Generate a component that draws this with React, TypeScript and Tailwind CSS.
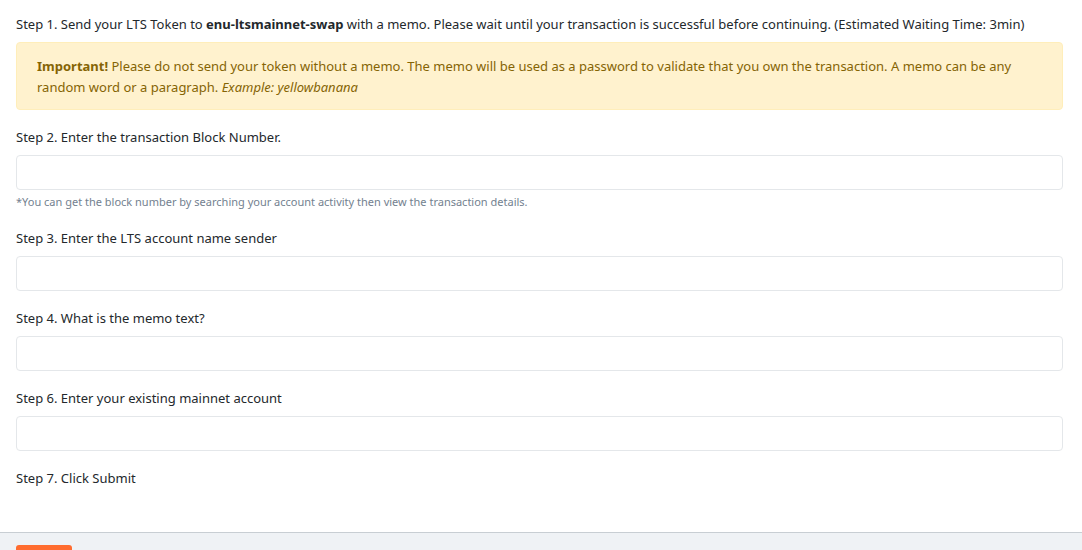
import { useId } from "react";

function Field({ label, hint }: { label: string; hint?: string }) {
  const id = useId();
  const hintId = `${id}-hint`;
  return (
    <div className="mb-[17px] flex flex-col">
      <label htmlFor={id} className="mb-[7px]">{label}</label>
      <input
        id={id}
        type="text"
        aria-describedby={hint ? hintId : undefined}
        className="h-[35px] w-full rounded-[4px] border border-[#e4e7ea] bg-white px-3 text-[#5c6873] outline-none focus:border-[#8ad4ee]"
      />
      {hint && (
        <small id={hintId} className="mt-1 pb-px text-[11px] leading-4 text-[#73818f]">
          {hint}
        </small>
      )}
    </div>
  );
}

export default function App() {
  return (
    <form
      className="flex min-h-screen flex-col bg-white font-['Noto_Sans',sans-serif] text-[13px] leading-[21px] text-[#23282c]"
      onSubmit={(e) => e.preventDefault()}
    >
      <div className="pt-3.5 pr-[19px] pb-[27px] pl-4">
        <p className="mb-[7px]">
          Step 1. Send your LTS Token to <strong>enu-ltsmainnet-swap</strong> with a memo. Please wait until your
          transaction is successful before continuing. (Estimated Waiting Time: 3min)
        </p>
        <div
          role="alert"
          className="mb-[17px] rounded-[4px] border border-[#ffeeba] bg-[#fff2ce] px-5 pt-[13px] pb-[11px] text-[#856404]"
        >
          <strong>Important!</strong> Please do not send your token without a memo. The memo will be used as a password
          to validate that you own the transaction. A memo can be any random word or a paragraph.{" "}
          <em>Example: yellowbanana</em>
        </div>
        <Field
          label="Step 2. Enter the transaction Block Number."
          hint="*You can get the block number by searching your account activity then view the transaction details."
        />
        <Field label="Step 3. Enter the LTS account name sender" />
        <Field label="Step 4. What is the memo text?" />
        <Field label="Step 6. Enter your existing mainnet account" />
        <p className="mb-4">Step 7. Click Submit</p>
      </div>
      <footer className="border-t border-[#c8ced3] bg-[#eff2f5] px-4 py-3">
        <button type="submit" className="block w-14 rounded-[3px] bg-[#ff6c2f] py-2 text-center text-xs text-white">
          Submit
        </button>
      </footer>
    </form>
  );
}
